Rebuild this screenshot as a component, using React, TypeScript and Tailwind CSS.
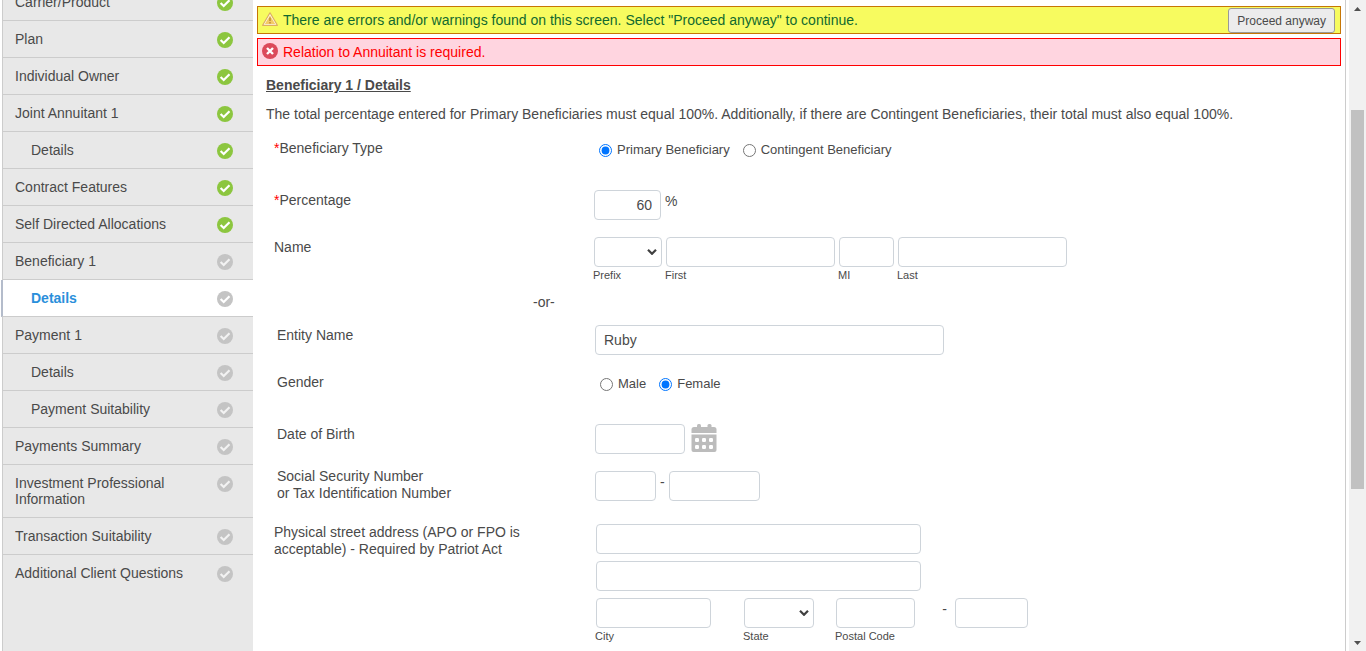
import type { ReactNode } from 'react';

type Step = { label: string; done?: boolean; sub?: boolean; active?: boolean };

const steps: Step[] = [
  { label: 'Carrier/Product', done: true },
  { label: 'Plan', done: true },
  { label: 'Individual Owner', done: true },
  { label: 'Joint Annuitant 1', done: true },
  { label: 'Details', done: true, sub: true },
  { label: 'Contract Features', done: true },
  { label: 'Self Directed Allocations', done: true },
  { label: 'Beneficiary 1' },
  { label: 'Details', sub: true, active: true },
  { label: 'Payment 1' },
  { label: 'Details', sub: true },
  { label: 'Payment Suitability', sub: true },
  { label: 'Payments Summary' },
  { label: 'Investment Professional Information' },
  { label: 'Transaction Suitability' },
  { label: 'Additional Client Questions' },
];

const box =
  'block h-[30px] rounded-[4px] border border-[#ced4da] bg-white px-2 text-[14px] text-[#4a4a4a] outline-none';

function StepIcon({ done, active }: { done?: boolean; active?: boolean }) {
  return (
    <svg viewBox="0 0 16 16" className="mt-[3px] size-4 shrink-0" aria-hidden="true">
      <circle cx="8" cy="8" r="8" fill={done ? '#8cc63f' : '#c4c4c4'} />
      <path
        d="M3.600 8 6.700 11l5.800-5.800"
        fill="none"
        stroke={active || done ? '#ffffff' : '#f2f2f2'}
        strokeWidth="2.2"
      />
    </svg>
  );
}

function WarningIcon() {
  return (
    <svg viewBox="0 0 16 14" className="-mt-0.5 h-[14px] w-4 shrink-0" aria-hidden="true">
      <path d="M8 .8 15.4 13.3H.6Z" fill="#fffbe6" stroke="#dcae62" strokeWidth="1.2" strokeLinejoin="round" />
      <path d="M8 3.400 13.200 12H2.800Z" fill="#f3cb66" />
      <path d="M8 5.600v3.400M8 10v1.500" stroke="#b98336" strokeWidth="1.400" />
    </svg>
  );
}

function ErrorIcon() {
  return (
    <svg viewBox="0 0 16 16" className="-mt-0.5 size-4 shrink-0" aria-hidden="true">
      <circle cx="8" cy="8" r="8" fill="#dc4a5b" />
      <path d="m5 5 6 6m0-6-6 6" stroke="#fff" strokeWidth="2.4" />
    </svg>
  );
}

function CalendarIcon() {
  return (
    <svg viewBox="0 0 26 28" className="h-7 w-[26px]" aria-hidden="true">
      <g fill="#bcbcbc">
        <rect x="6" y="0" width="4" height="6" rx="1.500" />
        <rect x="16.500" y="0" width="4" height="6" rx="1.500" />
        <path d="M3 3h20q2.500 0 2.500 2.500V9H.5V5.500Q.5 3 3 3Z" />
        <path d="M.5 10.500h25V26q0 2-2 2h-21q-2 0-2-2Z" />
      </g>
      <g fill="#fff">
        <rect x="4" y="14" width="4" height="4" rx="1.200" />
        <rect x="11" y="14" width="4" height="4" rx="1.200" />
        <rect x="18" y="14" width="4" height="4" rx="1.200" />
        <rect x="4" y="21" width="4" height="4" rx="1.200" />
        <rect x="11" y="21" width="4" height="4" rx="1.200" />
        <rect x="18" y="21" width="4" height="4" rx="1.200" />
      </g>
    </svg>
  );
}

function Select({ id, className, label }: { id: string; className: string; label: string }) {
  return (
    <div className={`grid ${className}`}>
      <select id={id} aria-label={label} className={`${box} col-start-1 row-start-1 w-full appearance-none`}>
        <option></option>
      </select>
      <svg
        viewBox="0 0 10 6"
        className="pointer-events-none col-start-1 row-start-1 mr-[5px] h-[6px] w-[10px] self-center justify-self-end"
        aria-hidden="true"
      >
        <path d="m1 .8 4 4 4-4" fill="none" stroke="#404040" strokeWidth="2.200" />
      </svg>
    </div>
  );
}

function Field({ id, label, className, select }: { id: string; label: string; className: string; select?: boolean }) {
  return (
    <div className={className}>
      {select ? <Select id={id} label={label} className="w-full" /> : <input id={id} type="text" className={`${box} w-full`} />}
      <label htmlFor={id} className="-ml-px block text-[11px] leading-4 whitespace-nowrap">
        {label}
      </label>
    </div>
  );
}

function Radio({ name, label, checked }: { name: string; label: string; checked?: boolean }) {
  return (
    <label className="flex items-center gap-[5px] text-[13px] leading-4">
      <input type="radio" name={name} defaultChecked={checked} className="m-0 size-[13px] accent-[#0075ff]" />
      {label}
    </label>
  );
}

function Label({ htmlFor, required, children }: { htmlFor?: string; required?: boolean; children: ReactNode }) {
  return (
    <label htmlFor={htmlFor} className="block pt-0.5 leading-[17px]">
      {required && <span className="text-[#ff0000]">*</span>}
      {children}
    </label>
  );
}

export default function App() {
  return (
    <div className="flex h-screen overflow-hidden bg-white pl-0.5 font-['Liberation_Sans',Arial,sans-serif] text-[14px] text-[#4a4a4a]">
      <aside className="w-[251px] shrink-0 border-l border-[#cccccc] bg-[#e8e8e8]">
        <nav className="-mt-4">
          {steps.map((s, i) => (
            <a
              key={i}
              href="#"
              className={`flex justify-between border-b pr-5 leading-4 ${i === steps.length - 1 ? 'border-transparent' : 'border-[#cccccc]'} ${
                s.active ? '-ml-0.5 border-l-2 border-l-[#b4bccb] bg-white font-bold text-[#2a8fdb]' : ''
              } ${s.sub ? 'pl-7' : 'pl-3'}`}
            >
              <span className="max-w-[180px] py-[10px]">{s.label}</span>
              <span className="pt-2">
                <StepIcon done={s.done} active={s.active} />
              </span>
            </a>
          ))}
        </nav>
      </aside>

      <main className="mr-[3px] min-w-0 flex-1 border-r border-[#cccccc] pt-1.5 pr-1 pl-1">
        <div className="flex h-7 items-center gap-[5px] border border-[#c67605] bg-[#f7fb5f] pr-[5px] pl-1 text-[#11692f]">
          <WarningIcon />
          <span className="flex-1">
            There are errors and/or warnings found on this screen. Select "Proceed anyway" to continue.
          </span>
          <button
            type="button"
            className="mt-px h-[25px] rounded-[3px] border border-[#999999] bg-[#ececec] px-2 text-[12px] text-[#4a4a4a]"
          >
            Proceed anyway
          </button>
        </div>
        <div className="mt-1 flex h-7 items-center gap-[5px] border border-[#ff0000] bg-[#ffd5e0] pl-1 text-[#ff0000]">
          <ErrorIcon />
          Relation to Annuitant is required.
        </div>

        <h1 className="mt-[11px] ml-[9px] leading-[17px] font-bold underline">Beneficiary 1 / Details</h1>
        <p className="mt-3 ml-[9px] leading-[17px]">
          The total percentage entered for Primary Beneficiaries must equal 100%. Additionally, if there are Contingent
          Beneficiaries, their total must also equal 100%.
        </p>

        <form className="mt-[15px]">
          <section className="pl-[17px]">
            <div className="grid h-[52px] grid-cols-[320px_1fr]">
              <Label required>Beneficiary Type</Label>
              <div className="flex items-start gap-[13px] pt-1 pl-[5px]">
                <Radio name="type" label="Primary Beneficiary" checked />
                <Radio name="type" label="Contingent Beneficiary" />
              </div>
            </div>
            <div className="grid h-[47px] grid-cols-[320px_1fr]">
              <Label htmlFor="percentage" required>
                Percentage
              </Label>
              <div className="flex items-start gap-1">
                <input id="percentage" type="text" defaultValue="60" className={`${box} w-[67px] text-right`} />
                <span className="pt-[3px] leading-[17px]">%</span>
              </div>
            </div>
            <div className="grid grid-cols-[320px_1fr]">
              <Label htmlFor="prefix">Name</Label>
              <div className="flex gap-1">
                <Field id="prefix" label="Prefix" className="w-[68px]" select />
                <Field id="first" label="First" className="w-[169px]" />
                <Field id="mi" label="MI" className="w-[55px]" />
                <Field id="last" label="Last" className="w-[169px]" />
              </div>
            </div>
            <p className="mt-[11px] mb-[14px] pl-[259px] leading-[17px]">-or-</p>
          </section>

          <section className="pl-5">
            <div className="grid h-[47px] grid-cols-[318px_1fr]">
              <Label htmlFor="entity">Entity Name</Label>
              <input id="entity" type="text" defaultValue="Ruby" className={`${box} w-[349px]`} />
            </div>
            <div className="grid h-[52px] grid-cols-[318px_1fr]">
              <Label>Gender</Label>
              <div className="flex items-start gap-[13px] pt-1 pl-[5px]">
                <Radio name="gender" label="Male" />
                <Radio name="gender" label="Female" checked />
              </div>
            </div>
            <div className="grid h-[47px] grid-cols-[318px_1fr]">
              <Label htmlFor="dob">Date of Birth</Label>
              <div className="flex items-start gap-1.5">
                <input id="dob" type="text" className={`${box} w-[90px]`} />
                <button type="button" aria-label="Choose date">
                  <CalendarIcon />
                </button>
              </div>
            </div>
            <div className="-mt-[3px] grid h-[56px] grid-cols-[318px_1fr]">
              <label htmlFor="ssn" className="leading-[17px]">
                Social Security Number
                <br />
                or Tax Identification Number
              </label>
              <div className="flex items-start gap-1 pt-[3px]">
                <input id="ssn" type="text" className={`${box} w-[61px]`} />
                <span className="pt-[3px] leading-[17px]">-</span>
                <input type="text" aria-label="Tax identification number" className={`${box} w-[91px]`} />
              </div>
            </div>
          </section>

          <section className="grid grid-cols-[322px_1fr] pl-[17px]">
            <label htmlFor="street" className="pr-14 leading-[17px]">
              Physical street address (APO or FPO is acceptable) - Required by Patriot Act
            </label>
            <div>
              <input id="street" type="text" className={`${box} w-[325px]`} />
              <input type="text" aria-label="Address line 2" className={`${box} mt-[7px] w-[325px]`} />
              <div className="mt-[7px] flex">
                <Field id="city" label="City" className="mr-[33px] w-[115px]" />
                <Field id="state" label="State" className="mr-[22px] w-[70px]" select />
                <Field id="postal" label="Postal Code" className="w-[79px]" />
                <span className="w-10 pt-[3px] pr-2 text-right leading-[17px]">-</span>
                <input type="text" aria-label="Postal code extension" className={`${box} w-[73px]`} />
              </div>
            </div>
          </section>
        </form>
      </main>

      <div className="flex w-[17px] shrink-0 flex-col items-center bg-[#f1f1f1]" aria-hidden="true">
        <div className="flex h-[17px] items-center">
          <svg viewBox="0 0 7 4" className="h-1 w-[7px]">
            <path d="M0 4 3.500 0 7 4Z" fill="#505050" />
          </svg>
        </div>
        <div className="flex w-[13px] flex-1 flex-col">
          <div className="flex-[93]" />
          <div className="flex-[379] bg-[#c1c1c1]" />
          <div className="flex-[145]" />
        </div>
        <div className="flex h-[17px] items-center">
          <svg viewBox="0 0 7 4" className="h-1 w-[7px]">
            <path d="M0 0 3.500 4 7 0Z" fill="#505050" />
          </svg>
        </div>
      </div>
    </div>
  );
}
